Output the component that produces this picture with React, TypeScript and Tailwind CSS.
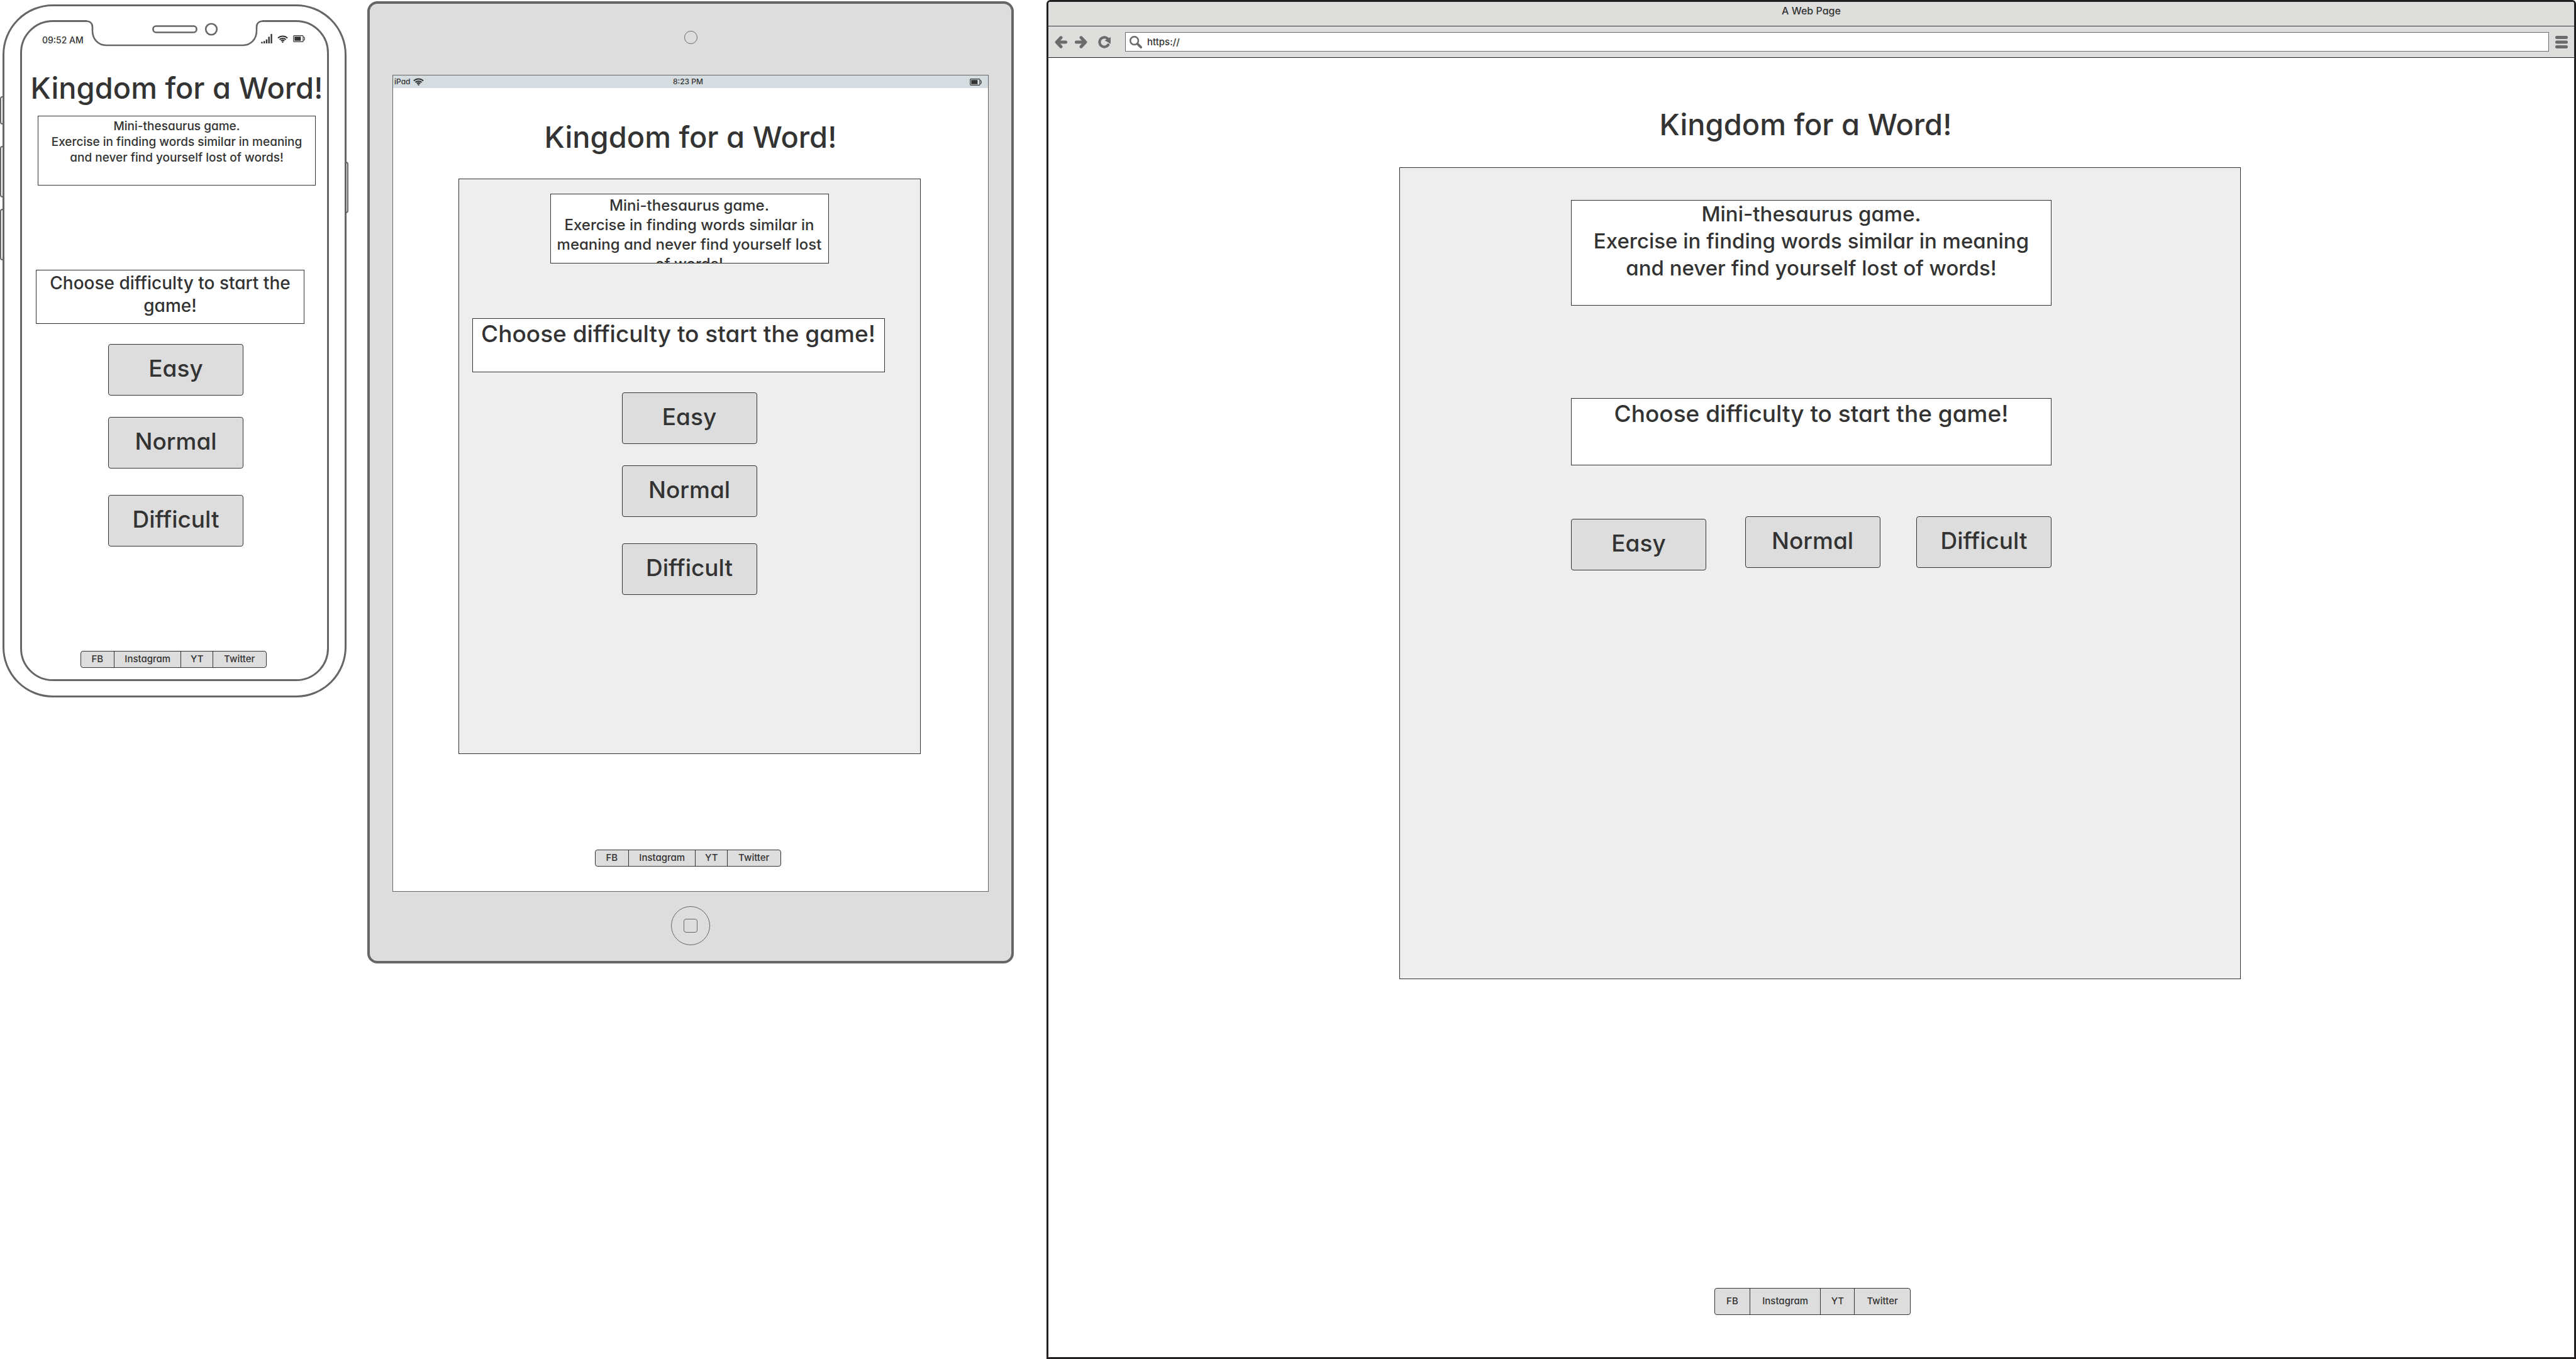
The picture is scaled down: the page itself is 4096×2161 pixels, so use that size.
import type { ReactNode } from 'react';

const LEVELS = ['Easy', 'Normal', 'Difficult'] as const;

function WifiIcon() {
  return (
    <svg viewBox="0 0 26 19" className="h-3 w-[17px]" fill="none" stroke="#333333" strokeWidth="3.2" aria-hidden="true">
      <path d="M1 7.2 A17 17 0 0 1 25 7.2" />
      <path d="M5 11 A11.5 11.5 0 0 1 21 11" />
      <path d="M8.8 14.4 A6.3 6.3 0 0 1 17.2 14.4" />
      <circle cx="13" cy="17" r="2" fill="#333333" stroke="none" />
    </svg>
  );
}

function BatteryIcon() {
  return (
    <svg viewBox="0 0 29 17" className="h-[11px] w-[19px]" aria-hidden="true">
      <rect x="1" y="1" width="23.5" height="15" rx="1.5" fill="none" stroke="#333333" strokeWidth="1.8" />
      <rect x="3.4" y="3.4" width="15.5" height="10.2" fill="#333333" />
      <path d="M25 4.5 Q28 4.5 28 6.5 V10.5 Q28 12.5 25 12.5" fill="none" stroke="#333333" strokeWidth="1.8" />
    </svg>
  );
}

function SignalIcon() {
  return (
    <svg viewBox="0 0 28 24" className="h-[15px] w-[18px]" fill="#333333" aria-hidden="true">
      <rect x="0" y="20" width="3.8" height="4" />
      <rect x="6" y="18" width="3.8" height="6" />
      <rect x="12" y="14" width="3.8" height="10" />
      <rect x="18" y="7" width="3.8" height="17" />
      <rect x="24.2" y="0" width="3.8" height="24" />
    </svg>
  );
}

function ArrowIcon({ className = '' }: { className?: string }) {
  return (
    <svg viewBox="0 0 32 32" className={`size-5 ${className}`} fill="none" stroke="#6b6b6b" strokeWidth="8" strokeLinecap="round" strokeLinejoin="round" aria-hidden="true">
      <path d="M16 4.5 L5 16 L16 27.5" />
      <path d="M28 16 H7" />
    </svg>
  );
}

function ReloadIcon() {
  return (
    <svg viewBox="0 0 32 32" className="size-5" aria-hidden="true">
      <path d="M24.5 7.2 A12.2 12.2 0 1 0 26 22.8" fill="none" stroke="#6b6b6b" strokeWidth="6.6" strokeLinecap="round" />
      <path d="M32 3 V20.5 L17 11.5 Z" fill="#6b6b6b" />
    </svg>
  );
}

function SearchIcon() {
  return (
    <svg viewBox="0 0 32 32" className="size-5 shrink-0" fill="none" stroke="#6b6b6b" aria-hidden="true">
      <circle cx="12.2" cy="12.2" r="10.2" strokeWidth="4" />
      <path d="M20.5 20.5 L29 29" strokeWidth="6" strokeLinecap="round" />
    </svg>
  );
}

function MenuIcon() {
  return (
    <svg viewBox="0 0 32 32" className="size-5" fill="#6b6b6b" aria-hidden="true">
      <rect x="0" y="0" width="32" height="8" rx="4" />
      <rect x="0" y="12" width="32" height="8" rx="4" />
      <rect x="0" y="24" width="32" height="8" rx="4" />
    </svg>
  );
}

function Title({ className = '' }: { className?: string }) {
  return <h1 className={`whitespace-nowrap text-center text-[47px] leading-[56px] ${className}`}>Kingdom for a Word!</h1>;
}

function TextBox({ className, children }: { className: string; children: ReactNode }) {
  return <p className={`overflow-hidden whitespace-nowrap border border-[#333333] bg-white text-center ${className}`}>{children}</p>;
}

function LevelButton({ label, className = '' }: { label: string; className?: string }) {
  return (
    <button type="button" className={`h-[82px] w-[215px] rounded border border-[#333333] bg-[#dddddd] pb-[5px] text-[37px] leading-[44px] ${className}`}>
      {label}
    </button>
  );
}

function LevelStack({ className = '' }: { className?: string }) {
  return (
    <div className={`mt-8 flex flex-col items-center self-center ${className}`}>
      <LevelButton label="Easy" />
      <LevelButton label="Normal" className="mt-[34px]" />
      <LevelButton label="Difficult" className="mt-[42px]" />
    </div>
  );
}

function SocialLinks({ className }: { className: string }) {
  return (
    <nav aria-label="Social" className={`grid divide-x divide-[#333333] self-center rounded border border-[#333333] bg-[#dddddd] text-center text-[15px] leading-5 ${className}`}>
      {['FB', 'Instagram', 'YT', 'Twitter'].map((name) => (
        <a key={name} href="#" className="flex items-center justify-center pb-0.5">
          {name}
        </a>
      ))}
    </nav>
  );
}

function Phone() {
  return (
    <section aria-label="Phone" className="relative w-[554px] shrink-0 pl-1 pr-[3px] pt-[7px]">
      <span className="absolute left-0 top-[153px] h-[45px] w-[7px] rounded-l border-2 border-[#666666]" />
      <span className="absolute left-0 top-[232px] h-[82px] w-[7px] rounded-l border-2 border-[#666666]" />
      <span className="absolute left-0 top-[332px] h-[82px] w-[7px] rounded-l border-2 border-[#666666]" />
      <span className="absolute right-0 top-[257px] h-[82px] w-[7px] rounded-r border-2 border-[#666666]" />
      <div className="relative rounded-[80px] border-3 border-[#666666] bg-white px-[25px] pb-[23px] pt-[22px]">
        <div className="relative flex flex-col rounded-[52px] border-3 border-[#666666] pb-[18px] pt-[19px]">
          <svg viewBox="132 30 292 46" className="absolute -top-[5px] left-1/2 h-[46px] w-[292px] -translate-x-1/2" fill="none" stroke="#666666" strokeWidth="2.6" aria-hidden="true">
            <rect x="138" y="30" width="279" height="6" fill="#ffffff" stroke="none" />
            <path d="M136 33.5 C144 33.5 147 38 147 43 V49 C147 62 156 72 169 72 H386 C399 72 408 62 408 49 V43 C408 38 411 33.5 419 33.5" fill="#ffffff" />
            <rect x="243.5" y="41.5" width="69" height="10" rx="4.5" />
            <circle cx="336" cy="46.5" r="8.8" />
          </svg>
          <div className="flex h-5 items-start justify-between pl-8 pr-[35px]">
            <span className="text-[14px] leading-5">09:52 AM</span>
            <span className="flex items-center gap-2">
              <SignalIcon />
              <WifiIcon />
              <BatteryIcon />
            </span>
          </div>
          <Title className="mt-[38px] pl-[7px]" />
          <TextBox className="ml-[25px] mt-4 h-[111px] w-[442px] pt-[3px] text-[19px] leading-[25px]">
            Mini-thesaurus game.
            <br />
            Exercise in finding words similar in meaning
            <br />
            and never find yourself lost of words!
          </TextBox>
          <TextBox className="ml-[22px] mt-[134px] h-[86px] w-[427px] pt-0.5 text-[28px] leading-9">
            Choose difficulty to start the
            <br />
            game!
          </TextBox>
          <LevelStack className="ml-1" />
          <SocialLinks className="mr-1 mt-[166px] h-[27px] w-[296px] grid-cols-[54fr_107fr_51fr_84fr]" />
        </div>
      </div>
    </section>
  );
}

function Tablet() {
  return (
    <section aria-label="Tablet" className="ml-[30px] mt-0.5 flex w-[1028px] shrink-0 flex-col items-center rounded-2xl border-4 border-[#666666] bg-[#dddddd] px-9 pb-[25px] pt-[43px]">
      <span className="size-[21px] rounded-full border border-[#666666]" />
      <div className="mt-[49px] flex w-full flex-col border border-[#666666] bg-white pb-[39px]">
        <div className="grid h-5 grid-cols-[1fr_auto_1fr] items-center bg-[#d6dde0] pl-0.5 pr-2.5 text-[12px] leading-5">
          <span className="flex items-center gap-[5px]">
            iPad <WifiIcon />
          </span>
          <span>8:23 PM</span>
          <span className="justify-self-end">
            <BatteryIcon />
          </span>
        </div>
        <Title className="mt-[50px]" />
        <div className="mr-1 mt-[38px] flex h-[915px] w-[735px] flex-col self-center border border-[#333333] bg-[#eeeeee] pt-[23px]">
          <TextBox className="h-[111px] w-[443px] self-center pt-0.5 text-[24px] leading-[31px]">
            Mini-thesaurus game.
            <br />
            Exercise in finding words similar in
            <br />
            meaning and never find yourself lost
            <br />
            of words!
          </TextBox>
          <TextBox className="ml-[21px] mt-[87px] h-[86px] w-[656px] pt-0.5 text-[37px] leading-[44px]">Choose difficulty to start the game!</TextBox>
          <LevelStack />
        </div>
        <SocialLinks className="mr-[9px] mt-[152px] h-[27px] w-[296px] grid-cols-[54fr_107fr_51fr_84fr]" />
      </div>
      <button type="button" aria-label="Home" className="mt-[23px] flex size-[62px] items-center justify-center rounded-full border border-[#666666]">
        <span className="size-[22px] rounded border border-[#666666]" />
      </button>
    </section>
  );
}

function Browser() {
  return (
    <section aria-label="Browser" className="ml-[52px] flex min-h-screen flex-1 flex-col rounded-t-md border-3 border-[#231f20] bg-white">
      <header className="rounded-t-sm bg-[#dededc]">
        <p className="h-[39px] border-b border-[#333333] pt-1 text-center text-[16px] leading-5">A Web Page</p>
        <div className="flex h-[50px] items-center border-b border-[#231f20] px-[10px]">
          <button type="button" aria-label="Back">
            <ArrowIcon />
          </button>
          <button type="button" aria-label="Forward" className="ml-3">
            <ArrowIcon className="rotate-180" />
          </button>
          <button type="button" aria-label="Reload" className="ml-[17px]">
            <ReloadIcon />
          </button>
          <label className="ml-[23px] flex h-[31px] flex-1 items-center gap-2 border border-[#6b6b6b] bg-white pl-1.5">
            <SearchIcon />
            <input type="text" aria-label="Address" defaultValue="https://" className="h-5 w-full text-[15px] leading-5 outline-none" />
          </label>
          <button type="button" aria-label="Menu" className="ml-[10px]">
            <MenuIcon />
          </button>
        </div>
      </header>
      <main className="flex flex-1 flex-col items-center">
        <Title className="mr-[18px] mt-[78px]" />
        <div className="ml-7 mt-10 flex h-[1291px] w-full max-w-[1338px] flex-col items-center border border-[#333333] bg-[#eeeeee] pr-7 pt-[51px]">
          <TextBox className="h-[168px] w-[764px] text-[33px] leading-[43px]">
            Mini-thesaurus game.
            <br />
            Exercise in finding words similar in meaning
            <br />
            and never find yourself lost of words!
          </TextBox>
          <TextBox className="mt-[147px] h-[107px] w-[764px] pt-0.5 text-[37px] leading-[44px]">Choose difficulty to start the game!</TextBox>
          <div className="mt-[81px] flex w-[764px] items-start justify-between">
            {LEVELS.map((level) => (
              <LevelButton key={level} label={level} className={level === 'Easy' ? 'mt-1' : level === 'Normal' ? 'ml-1' : ''} />
            ))}
          </div>
        </div>
        <SocialLinks className="mb-[67px] ml-1 mt-auto h-[43px] w-[312px] grid-cols-[56fr_113fr_54fr_88fr]" />
      </main>
    </section>
  );
}

export default function App() {
  return (
    <div className="flex min-h-screen w-full items-start bg-white font-[Inter,sans-serif] font-medium text-[#333333] [font-feature-settings:'cv11']">
      <Phone />
      <Tablet />
      <Browser />
    </div>
  );
}
